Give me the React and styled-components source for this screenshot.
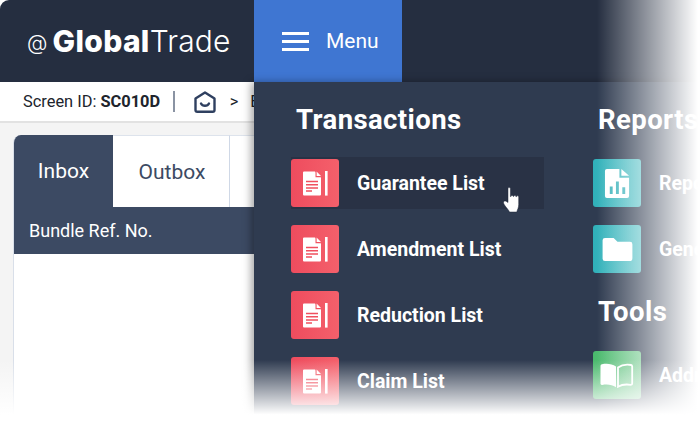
import styled, { createGlobalStyle } from 'styled-components'

const GlobalStyle = createGlobalStyle`
    html, body {
        margin: 0;
        padding: 0;
        background: #fff;
        overflow: hidden;
    }
    * {
        box-sizing: border-box;
    }
`

const DocIcon = () => (
    <svg width="28" height="28" viewBox="0 0 28 28">
        <path d="M3 2.5h11l6 6v17a1 1 0 0 1-1 1H3a1 1 0 0 1-1-1v-22a1 1 0 0 1 1-1z" fill="#fff" />
        <path d="M14.5 2.5v5.8h5.5z" fill="#f0505f" />
        <path d="M15.6 2.5l4.4 4.6h-4.4z" fill="#fff" />
        <path d="M5 12.5h12M5 15.7h12M5 18.9h12M5 22.1h6" stroke="#f0505f" strokeWidth="1.5" />
        <rect x="24" y="2" width="2.6" height="24.6" fill="#fff" />
    </svg>
)

const ReportIcon = () => (
    <svg width="27" height="33" viewBox="0 0 28 32">
        <path d="M3 1h13v9h10v19a2 2 0 0 1-2 2H3a2 2 0 0 1-2-2V3a2 2 0 0 1 2-2z" fill="#fff" />
        <path d="M18 1l8 7h-8z" fill="#fff" />
        <path d="M6 19h3v8H6zM12.4 14h3v13h-3zM19 20h3v7h-3z" fill="#40b5bd" />
    </svg>
)

const FolderIcon = () => (
    <svg width="31" height="25" viewBox="0 0 32 26">
        <path d="M3 1h9l4 4h13a2.5 2.5 0 0 1 2.5 2.5V22a3 3 0 0 1-3 3H3a2.5 2.5 0 0 1-2.5-2.5v-19A2.5 2.5 0 0 1 3 1z" fill="#fff" />
    </svg>
)

const BookIcon = () => (
    <svg width="34" height="26" viewBox="0 0 34 26">
        <path d="M16 4.500C12 1.800 7 1.200 2 2.200 1 2.400.5 3 .5 4v17.600c0 1 .8 1.500 1.800 1.300 5-.9 9.800-.3 13.700 2.400z" fill="#fff" />
        <path d="M18 5.500c3.500-2.500 8-3.300 13-2.500.7.100 1.200.700 1.200 1.400v17c0 1-.8 1.500-1.700 1.400-4.500-.7-9-.1-12.500 2z" fill="none" stroke="#fff" strokeWidth="1.800" />
    </svg>
)

const HomeIcon = () => (
    <svg width="22" height="22" viewBox="0 0 22 22" fill="none" stroke="#2f4060" strokeWidth="2.400">
        <path d="M1.500 7.500L11 1.500l9.500 6v11.500a1.800 1.800 0 0 1-1.800 1.800H3.300a1.800 1.800 0 0 1-1.800-1.800z" strokeLinejoin="round" />
        <path d="M7 12.500c1.500 3 6.500 3 8 0" strokeLinecap="round" />
    </svg>
)

const HandCursor = () => (
    <svg width="20" height="26" viewBox="0 0 20 26">
        <path
            d="M5 1.500c0-1.200 2.400-1.200 2.400 0V9.500l.6 0c0-1.500 2.300-1.500 2.300 0h.4c0-1.400 2.300-1.400 2.300 0.200h.4c0-1.200 2.300-1.200 2.300.4v7.400c0 3.500-1.400 5-1.900 7.500H6.500c-1.300-3-6-7-6-9.500 0-1.700 1.900-2 3-1L5 15.500z"
            fill="#fff"
            stroke="#20283a"
            strokeWidth=".5"
        />
    </svg>
)

const transactions = ['Guarantee List', 'Amendment List', 'Reduction List', 'Claim List']

export default function App() {
    return (
        <>
            <GlobalStyle />
            <Frame>
                <Header>
                    <Logo>
                        <LogoAt>@</LogoAt>
                        <b>Global</b>Trade
                    </Logo>
                    <MenuButton>
                        <Burger>
                            <span />
                            <span />
                            <span />
                        </Burger>
                        Menu
                    </MenuButton>
                </Header>
                <Crumbs>
                    <span>
                        Screen ID: <b>SC010D</b>
                    </span>
                    <CrumbLine />
                    <HomeIcon />
                    <CrumbArrow>&gt;</CrumbArrow>
                    <span>Bundle</span>
                </Crumbs>
                <Content>
                    <Card>
                        <Tabs>
                            <Tab $active>Inbox</Tab>
                            <Tab>Outbox</Tab>
                            <Tab $blank />
                        </Tabs>
                        <TableHead>Bundle Ref. No.</TableHead>
                    </Card>
                </Content>

                <MenuPanel>
                    <Column>
                        <Heading>Transactions</Heading>
                        {transactions.map((name, i) => (
                            <Item key={name} $hover={i === 0}>
                                <Tile $color="red">
                                    <DocIcon />
                                </Tile>
                                {name}
                            </Item>
                        ))}
                    </Column>
                    <Column>
                        <Heading>Reports</Heading>
                        <Item>
                            <Tile $color="teal">
                                <ReportIcon />
                            </Tile>
                            Report List
                        </Item>
                        <Item>
                            <Tile $color="teal">
                                <FolderIcon />
                            </Tile>
                            Generated
                        </Item>
                        <Heading $second>Tools</Heading>
                        <Item>
                            <Tile $color="green">
                                <BookIcon />
                            </Tile>
                            Address Book
                        </Item>
                    </Column>
                </MenuPanel>

                <Pointer>
                    <HandCursor />
                </Pointer>
                <FadeRight />
                <FadeBottom />
            </Frame>
        </>
    )
}

const Frame = styled.div`
    position: relative;
    width: 700px;
    height: 422px;
    overflow: hidden;
    background: #f4f4f4;
    font-family: Roboto, 'Liberation Sans', sans-serif;
    border-top-left-radius: 9px;
`

const Header = styled.div`
    display: flex;
    height: 82px;
    background: #252e40;
`

const Logo = styled.div`
    width: 254px;
    padding: 25px 0 0 27px;
    color: #fff;
    font-family: Inter, sans-serif;
    font-size: 30px;
    font-weight: 300;
    letter-spacing: 0.2px;
    line-height: 32px;
    white-space: nowrap;

    b {
        font-weight: 800;
        letter-spacing: 0.3px;
    }
`

const LogoAt = styled.span`
    position: relative;
    top: -2px;
    margin-right: 5px;
    font-size: 21px;
`

const MenuButton = styled.div`
    display: flex;
    align-items: center;
    gap: 17px;
    width: 148px;
    padding-left: 28px;
    background: #3f76d2;
    color: #fff;
    font-size: 21px;
`

const Burger = styled.div`
    display: flex;
    flex-direction: column;
    gap: 5px;
    width: 27px;

    span {
        height: 3px;
        background: #fff;
    }
`

const Crumbs = styled.div`
    display: flex;
    align-items: center;
    height: 41px;
    padding-left: 23px;
    background: #fff;
    border-bottom: 2px solid #e2e2e2;
    color: #20242c;
    font-size: 16.400px;
    white-space: nowrap;
`

const CrumbLine = styled.div`
    width: 1.500px;
    height: 21px;
    margin: 0 19px 0 13px;
    background: #8a93a3;
`

const CrumbArrow = styled.span`
    margin: 0 12px 0 14px;
`

const Content = styled.div`
    padding: 12px 0 0 13px;
`

const Card = styled.div`
    height: 300px;
    background: #fff;
    border-left: 1px solid #d9dfe9;
    border-top-left-radius: 8px;
    overflow: hidden;
`

const Tabs = styled.div`
    display: flex;
    height: 72px;
`

const Tab = styled.div`
    display: flex;
    align-items: center;
    justify-content: center;
    width: ${props => (props.$active ? '99px' : '117px')};
    flex: ${props => (props.$blank ? '1' : 'none')};
    padding-left: ${props => (props.$active ? '0' : '2px')};
    background: ${props => (props.$active ? '#3c4a63' : '#fff')};
    color: ${props => (props.$active ? '#fff' : '#3c4a63')};
    border-top: ${props => (props.$active ? 'none' : '1px solid #dde3ec')};
    border-right: ${props => (props.$active || props.$blank ? 'none' : '1px solid #cfd8e6')};
    font-size: 21px;
`

const TableHead = styled.div`
    display: flex;
    align-items: center;
    height: 47px;
    padding-left: 15px;
    background: #3c4a63;
    color: #fff;
    font-size: 18px;
`

const MenuPanel = styled.div`
    position: absolute;
    top: 82px;
    left: 254px;
    right: 0;
    bottom: 0;
    display: grid;
    grid-template-columns: 253px 1fr;
    column-gap: 49px;
    padding: 0 0 0 37px;
    background: #2f3b50;
    box-shadow: -3px 0 8px rgba(0, 0, 0, 0.35);
`

const Column = styled.div`
    display: flex;
    flex-direction: column;
    overflow: hidden;
`

const Heading = styled.h2`
    flex: none;
    height: ${props => (props.$second ? '60px' : '75px')};
    margin: 0;
    padding: ${props => (props.$second ? '6px' : '21px')} 0 0 5px;
    color: #fff;
    font-size: 27.500px;
    font-weight: 700;
    letter-spacing: 0.4px;
    line-height: 34px;
    white-space: nowrap;
`

const Item = styled.div`
    display: flex;
    flex: none;
    align-items: center;
    gap: 18px;
    height: 52px;
    margin-bottom: 14px;
    background: ${props => (props.$hover ? '#293245' : 'transparent')};
    color: #fff;
    font-size: 19.500px;
    font-weight: 700;
    white-space: nowrap;
`

const tileColors = {
    red: 'linear-gradient(90deg, #ee4c5e, #f4606b)',
    teal: 'linear-gradient(90deg, #2fb0b9, #5cc3c8)',
    green: 'linear-gradient(90deg, #49b96c, #72c98d)',
}

const Tile = styled.div`
    display: flex;
    flex: none;
    align-items: center;
    justify-content: center;
    width: 48px;
    height: 48px;
    border-radius: 3px;
    background: ${props => tileColors[props.$color]};
`

const Pointer = styled.div`
    position: absolute;
    top: 187px;
    left: 503px;
    line-height: 0;
`

const FadeRight = styled.div`
    position: absolute;
    top: 0;
    bottom: 0;
    left: 597px;
    right: 0;
    background: linear-gradient(90deg, rgba(255, 255, 255, 0), #fff 98%);
`

const FadeBottom = styled.div`
    position: absolute;
    left: 0;
    right: 0;
    bottom: 0;
    height: 62px;
    background: linear-gradient(180deg, rgba(255, 255, 255, 0), #fff 88%);
`
